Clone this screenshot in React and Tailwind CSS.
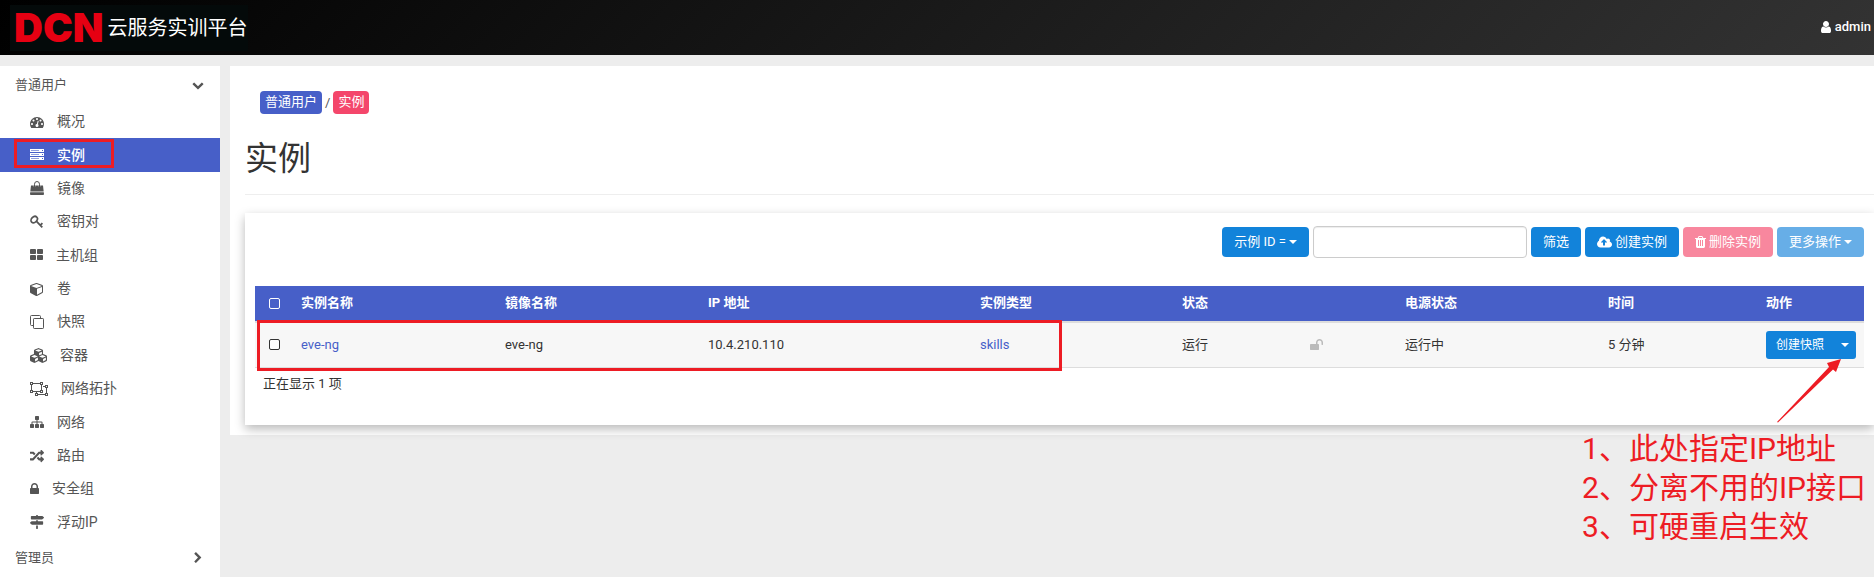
import React from "react";
import { FaCubes, FaRandom, FaMapSigns } from "react-icons/fa";

const PATHS = {
  user: "M1536 1399q0 109-62.5 187t-150.5 78h-854q-88 0-150.5-78t-62.5-187q0-85 8.5-160.5t31.5-152 58.5-131 94-89 134.5-34.5q131 128 313 128t313-128q76 0 134.5 34.5t94 89 58.5 131 31.5 152 8.5 160.5zm-256-887q0 159-112.5 271.5t-271.5 112.5-271.5-112.5-112.5-271.5 112.5-271.5 271.5-112.5 271.5 112.5 112.5 271.5z",
  gauge: "M384 1152q0-53-37.5-90.5t-90.5-37.5-90.5 37.5-37.5 90.5 37.5 90.5 90.5 37.5 90.5-37.5 37.5-90.5zm192-448q0-53-37.5-90.5t-90.5-37.5-90.5 37.5-37.5 90.5 37.5 90.5 90.5 37.5 90.5-37.5 37.5-90.5zm428 481l101-382q6-26-7.5-48.5t-38.5-29.5-48 6.5-30 39.5l-101 382q-60 5-107 43.5t-63 98.5q-20 77 20 146t117 89 146-20 89-117q16-60-6-117t-72-91zm660-33q0-53-37.5-90.5t-90.5-37.5-90.5 37.5-37.5 90.5 37.5 90.5 90.5 37.5 90.5-37.5 37.5-90.5zm-640-640q0-53-37.5-90.5t-90.5-37.5-90.5 37.5-37.5 90.5 37.5 90.5 90.5 37.5 90.5-37.5 37.5-90.5zm448 192q0-53-37.5-90.5t-90.5-37.5-90.5 37.5-37.5 90.5 37.5 90.5 90.5 37.5 90.5-37.5 37.5-90.5zm320 448q0 261-141 483-19 29-54 29h-1402q-35 0-54-29-141-221-141-483 0-182 71-348t191-286 286-191 348-71 348 71 286 191 191 286 71 348z",
  grid: "M832 1024v384q0 52-38 90t-90 38h-512q-52 0-90-38t-38-90v-384q0-52 38-90t90-38h512q52 0 90 38t38 90zm0-768v384q0 52-38 90t-90 38h-512q-52 0-90-38t-38-90v-384q0-52 38-90t90-38h512q52 0 90 38t38 90zm896 768v384q0 52-38 90t-90 38h-512q-52 0-90-38t-38-90v-384q0-52 38-90t90-38h512q52 0 90 38t38 90zm0-768v384q0 52-38 90t-90 38h-512q-52 0-90-38t-38-90v-384q0-52 38-90t90-38h512q52 0 90 38t38 90z",
  cube: "M896 1629l640-349v-636l-640 233v752zm-64-865l698-254-698-254-698 254zm832-252v768q0 35-18 65t-49 47l-704 384q-28 16-61 16t-61-16l-704-384q-31-17-49-47t-18-65v-768q0-40 23-73t61-47l704-256q22-8 44-8t44 8l704 256q38 14 61 47t23 73z",
  sitemap: "M1792 1248v320q0 40-28 68t-68 28h-320q-40 0-68-28t-28-68v-320q0-40 28-68t68-28h96v-192h-512v192h96q40 0 68 28t28 68v320q0 40-28 68t-68 28h-320q-40 0-68-28t-28-68v-320q0-40 28-68t68-28h96v-192h-512v192h96q40 0 68 28t28 68v320q0 40-28 68t-68 28h-320q-40 0-68-28t-28-68v-320q0-40 28-68t68-28h96v-192q0-52 38-90t90-38h512v-192h-96q-40 0-68-28t-28-68v-320q0-40 28-68t68-28h320q40 0 68 28t28 68v320q0 40-28 68t-68 28h-96v192h512q52 0 90 38t38 90v192h96q40 0 68 28t28 68z",
  lock: "M640 768h512v-192q0-106-75-181t-181-75-181 75-75 181v192zm832 96v576q0 40-28 68t-68 28h-960q-40 0-68-28t-28-68v-576q0-40 28-68t68-28h32v-192q0-184 132-316t316-132 316 132 132 316v192h32q40 0 68 28t28 68z",
  unlock: "M1728 576v256q0 26-19 45t-45 19h-64q-26 0-45-19t-19-45v-256q0-106-75-181t-181-75-181 75-75 181v192h96q40 0 68 28t28 68v576q0 40-28 68t-68 28h-960q-40 0-68-28t-28-68v-576q0-40 28-68t68-28h672v-192q0-185 131.5-316.5t316.5-131.5 316.5 131.5 131.5 316.5z",
  down: "M1683 808l-742 741q-19 19-45 19t-45-19l-742-741q-19-19-19-45.5t19-45.5l166-165q19-19 45-19t45 19l531 531 531-531q19-19 45-19t45 19l166 165q19 19 19 45.5t-19 45.5z",
  right: "M1363 877l-742 742q-19 19-45 19t-45-19l-166-166q-19-19-19-45t19-45l531-531-531-531q-19-19-19-45t19-45l166-166q19-19 45-19t45 19l742 742q19 19 19 45t-19 45z",
  upload: "M1280 928q0-14-9-23l-352-352q-9-9-23-9t-23 9l-351 351q-10 12-10 24 0 14 9 23t23 9h224v352q0 13 9.5 22.5t22.5 9.5h192q13 0 22.5-9.5t9.5-22.5v-352h224q13 0 22.5-9.5t9.5-22.5zm640 288q0 159-112.5 271.5t-271.5 112.5h-1088q-185 0-316.5-131.5t-131.5-316.5q0-130 70-240t188-165q-2-30-2-43 0-212 150-362t362-150q156 0 285.5 87t188.5 231q71-62 166-62 106 0 181 75t75 181q0 76-41 138 130 31 213.5 135.5t83.5 238.5z",
  trash: "M704 1376v-704q0-14-9-23t-23-9h-64q-14 0-23 9t-9 23v704q0 14 9 23t23 9h64q14 0 23-9t9-23zm256 0v-704q0-14-9-23t-23-9h-64q-14 0-23 9t-9 23v704q0 14 9 23t23 9h64q14 0 23-9t9-23zm256 0v-704q0-14-9-23t-23-9h-64q-14 0-23 9t-9 23v704q0 14 9 23t23 9h64q14 0 23-9t9-23zm-544-992h448l-48-117q-7-9-17-11h-317q-10 2-17 11zm928 32v64q0 14-9 23t-23 9h-96v948q0 83-47 143.5t-113 60.5h-832q-66 0-113-58.5t-47-141.5v-952h-96q-14 0-23-9t-9-23v-64q0-14 9-23t23-9h309l70-167q15-37 54-63t79-26h320q40 0 79 26t54 63l70 167h309q14 0 23 9t9 23z",
};

function Icon({ name, box = "0 0 1792 1792", className = "h-[14px] w-[14px]" }) {
  return (
    <svg viewBox={box} className={`shrink-0 ${className}`} fill="currentColor" aria-hidden="true">
      <path d={PATHS[name]} />
    </svg>
  );
}

function ServerIcon() {
  return (
    <svg viewBox="0 0 14 14" className="h-[14px] w-[14px] shrink-0" aria-hidden="true">
      {[1, 5, 9].map((y) => (
        <g key={y}>
          <rect x="0" y={y} width="14" height="3" fill="currentColor" />
          <rect x="1" y={y + 1} width="8" height="1" fill="#475fc8" opacity="0.6" />
          <rect x="12" y={y + 1} width="1" height="1" fill="#475fc8" />
        </g>
      ))}
    </svg>
  );
}

function BagIcon() {
  return (
    <svg viewBox="0 0 14 14" className="h-[14px] w-[14px] shrink-0" aria-hidden="true">
      <path d="M4.5 6V3.2a2.5 2.7 0 0 1 5 0V6" fill="none" stroke="currentColor" />
      <path d="M1 4.5h2.8v1.6h1.4V4.5h3.6v1.6h1.4V4.5H13l.7 6H.3zM.2 11.2h13.6l.2 1.9q0 .9-.9.9H.9q-.9 0-.9-.9z" fill="currentColor" />
    </svg>
  );
}

function KeyIcon() {
  return (
    <svg viewBox="0 0 14 14" className="h-[14px] w-[14px] shrink-0" fill="none" stroke="currentColor" aria-hidden="true">
      <ellipse cx="4.2" cy="4.6" rx="3.6" ry="2.7" transform="rotate(-45 4.2 4.6)" strokeWidth="1.7" />
      <path d="M6.3 6.2 12.3 12.4M10.2 10.4l2.2-2.2" strokeWidth="1.8" />
    </svg>
  );
}

function CloneIcon() {
  return (
    <svg viewBox="0 0 14 14" className="h-[14px] w-[14px] shrink-0" fill="none" stroke="currentColor" aria-hidden="true">
      <rect x="3.5" y="3.5" width="10" height="10" rx="0.7" />
      <path d="M3.5 10.5h-2q-1 0-1-1v-8q0-1 1-1h8q1 0 1 1v2" />
    </svg>
  );
}

function UngroupIcon() {
  const nodes = [[0, 0], [10, 0], [0, 8], [10, 8], [15, 3], [15, 11], [5, 11]];
  return (
    <svg viewBox="0 0 18 14" className="h-[14px] w-[18px] shrink-0" fill="none" stroke="currentColor" aria-hidden="true">
      <path d="M3 1.5h7M3 9.5h7M1.5 3v5M11.5 3v5M13 4.5h2M16.5 6v5M8 12.5h7M6.5 10v1" />
      {nodes.map(([x, y]) => (
        <rect key={`${x}-${y}`} x={x + 0.5} y={y + 0.5} width="2" height="2" />
      ))}
    </svg>
  );
}

function Caret() {
  return (
    <svg viewBox="0 0 8 4" className="h-1 w-2 shrink-0" fill="currentColor" aria-hidden="true">
      <path d="M0 0h8L4 4z" />
    </svg>
  );
}

const MENU = [
  ["概况", <Icon name="gauge" />],
  ["实例", <ServerIcon />],
  ["镜像", <BagIcon />],
  ["密钥对", <KeyIcon />],
  ["主机组", <Icon name="grid" box="64 0 1664 1792" className="h-[14px] w-[13px]" />],
  ["卷", <Icon name="cube" />],
  ["快照", <CloneIcon />],
  ["容器", <FaCubes className="h-[17px] w-[17px] shrink-0" />],
  ["网络拓扑", <UngroupIcon />],
  ["网络", <Icon name="sitemap" />],
  ["路由", <FaRandom className="h-[14px] w-[14px] shrink-0" />],
  ["安全组", <Icon name="lock" box="320 0 1152 1792" className="h-[14px] w-[9px]" />],
  ["浮动IP", <FaMapSigns className="h-[14px] w-[14px] shrink-0" />],
];

function Sidebar() {
  return (
    <nav className="w-[220px] shrink-0 bg-white text-[#555]">
      <button type="button" className="flex h-[37px] w-full items-center justify-between pr-4 pl-[15px] text-[13px]">
        <span>普通用户</span>
        <Icon name="down" className="h-3 w-3" />
      </button>
      <ul className="grid h-[436px] auto-rows-fr pt-[2px] text-[14px]">
        {MENU.map(([label, icon]) => {
          const active = label === "实例";
          return (
            <li key={label} className="relative">
              <a
                href="#"
                aria-current={active ? "page" : undefined}
                className={`flex h-full items-center gap-[13px] pl-[30px] ${active ? "bg-[#475fc8] font-medium text-white" : ""}`}
              >
                {icon}
                <span>{label}</span>
              </a>
              {active && <span className="absolute top-px left-[14px] h-[29px] w-[100px] border-3 border-[#ed1c24]" />}
            </li>
          );
        })}
      </ul>
      <button type="button" className="flex h-[37px] w-full items-center justify-between pr-4 pl-[15px] text-[13px]">
        <span>管理员</span>
        <Icon name="right" className="h-3 w-3" />
      </button>
    </nav>
  );
}

function Button({ className, children, ...rest }) {
  return (
    <button
      type="button"
      className={`flex h-[30px] shrink-0 items-center rounded-[4px] px-3 text-[13px] text-white ${className}`}
      {...rest}
    >
      {children}
    </button>
  );
}

function Toolbar() {
  return (
    <div className="flex items-center justify-end gap-1">
      <Button className="gap-[3px] bg-[#1283da]">
        示例 ID = <Caret />
      </Button>
      <input
        type="text"
        aria-label="筛选"
        className="h-8 w-[214px] rounded-[4px] border border-[#ccc] bg-white px-3 text-[13px] shadow-[inset_0_1px_1px_rgba(0,0,0,0.075)] outline-none"
      />
      <Button className="bg-[#1283da]">筛选</Button>
      <Button className="gap-[3px] bg-[#1283da]">
        <Icon name="upload" box="0 0 1920 1792" className="h-[14px] w-[15px]" />
        创建实例
      </Button>
      <Button className="gap-[3px] bg-[#f8879e]" disabled>
        <Icon name="trash" box="192 0 1408 1792" className="h-[14px] w-[11px]" />
        删除实例
      </Button>
      <Button className="gap-[3px] bg-[#67aee7]" disabled>
        更多操作 <Caret />
      </Button>
    </div>
  );
}

function InstanceTable() {
  return (
    <div className="relative mt-7">
      <table className="w-full table-fixed border-collapse text-left text-[13px]">
        <colgroup>
          <col className="w-[38px]" />
          <col className="w-[204px]" />
          <col className="w-[203px]" />
          <col className="w-[272px]" />
          <col className="w-[202px]" />
          <col className="w-[128px]" />
          <col className="w-[95px]" />
          <col className="w-[203px]" />
          <col className="w-[158px]" />
          <col className="w-[106px]" />
        </colgroup>
        <thead className="border-b-2 border-[#ddd] bg-[#475fc8] text-white">
          <tr className="h-[36px]">
            <th className="pl-[14px]">
              <input
                type="checkbox"
                aria-label="全选"
                className="block h-[11px] w-[11px] appearance-none rounded-[2px] border border-white"
              />
            </th>
            <th className="px-2 pb-0.5">实例名称</th>
            <th className="px-2 pb-0.5">镜像名称</th>
            <th className="px-2 pb-0.5">IP 地址</th>
            <th className="px-2 pb-0.5">实例类型</th>
            <th className="px-2 pb-0.5">状态</th>
            <th className="px-2 pb-0.5" />
            <th className="px-2 pb-0.5">电源状态</th>
            <th className="px-2 pb-0.5">时间</th>
            <th className="px-2 pb-0.5">动作</th>
          </tr>
        </thead>
        <tbody className="border-b border-[#ddd] bg-[#f7f7f7] text-[#333]">
          <tr className="h-[45px]">
            <td className="pl-[14px]">
              <input
                type="checkbox"
                aria-label="选择 eve-ng"
                className="block h-[11px] w-[11px] appearance-none rounded-[2px] border border-[#333] bg-white"
              />
            </td>
            <td className="px-2">
              <a href="#" className="text-[#475fc8]">eve-ng</a>
            </td>
            <td className="px-2">eve-ng</td>
            <td className="px-2">10.4.210.110</td>
            <td className="px-2">
              <a href="#" className="text-[#475fc8]">skills</a>
            </td>
            <td className="px-2">运行</td>
            <td className="px-2 text-[#bbb]">
              <Icon name="unlock" box="64 0 1664 1792" className="h-[14px] w-[13px]" />
            </td>
            <td className="px-2">运行中</td>
            <td className="px-2">5 分钟</td>
            <td className="pl-2">
              <div className="relative flex w-[90px] text-[12px] text-white">
                <button type="button" className="h-7 flex-1 rounded-l-[3px] bg-[#1283da]">
                  创建快照
                </button>
                <button
                  type="button"
                  aria-label="更多"
                  className="flex h-7 w-[22px] items-center justify-center rounded-r-[3px] bg-[#1283da]"
                >
                  <Caret />
                </button>
                <svg viewBox="0 0 66 64" className="absolute top-7 right-[15px] h-16 w-[66px]" fill="#ed1c24" aria-hidden="true">
                  <path d="M2 63 54 8 52 4 66 0 61 13 58 10.500 3 63.500z" />
                </svg>
              </div>
            </td>
          </tr>
        </tbody>
      </table>
      <div className="absolute top-[34px] left-0.5 h-[51px] w-1/2 border-3 border-[#ed1c24]" />
    </div>
  );
}

export default function App() {
  return (
    <div className="flex min-h-screen flex-col bg-[#ededed] font-['Roboto','Noto_Sans_CJK_SC',sans-serif] text-[#333]">
      <header className="flex h-[55px] items-center justify-between bg-[linear-gradient(135deg,#000,#333)] pr-[3px] pl-[10px] text-white">
        <div className="flex h-[46px] items-center gap-1 bg-[#040a0a] pl-1">
          <span className="font-['Inter',sans-serif] text-[40px] leading-none font-black text-[#e60012]">DCN</span>
          <span className="text-[20px] leading-none">云服务实训平台</span>
        </div>
        <a href="#" className="flex items-center gap-1 pb-0.5 text-[13px] font-medium">
          <Icon name="user" box="256 0 1280 1792" className="h-[14px] w-[10px]" />
          admin
        </a>
      </header>
      <div className="flex grow pt-[11px]">
        <Sidebar />
        <div className="relative ml-[10px] min-w-0 grow">
          <main className="bg-white pt-[25px] pb-[10px] pl-[15px]">
            <nav className="flex items-center gap-[3px] pl-[15px] text-[13px]">
              <a href="#" className="flex h-[23px] items-center rounded-[4px] bg-[#475fc8] px-[5px] pb-px text-white">普通用户</a>
              <span className="text-[#555]">/</span>
              <span className="flex h-[23px] items-center rounded-[4px] bg-[#f4466b] px-[5px] pb-px text-white">实例</span>
            </nav>
            <h1 className="mt-[25px] border-b border-[#eee] pb-[15px] text-[33px] leading-[40px]">实例</h1>
            <section className="mt-[18px] bg-white px-[10px] pt-[13px] pb-[31px] shadow-[0_4px_10px_rgba(0,0,0,0.28)]">
              <Toolbar />
              <InstanceTable />
              <p className="mt-1.5 pl-2 text-[13px] leading-5">正在显示 1 项</p>
            </section>
          </main>
          <ol className="absolute top-[363px] right-2 text-[30px] leading-[39px] text-[#ed1c24]">
            <li>1、此处指定IP地址</li>
            <li>2、分离不用的IP接口</li>
            <li>3、可硬重启生效</li>
          </ol>
        </div>
      </div>
    </div>
  );
}
